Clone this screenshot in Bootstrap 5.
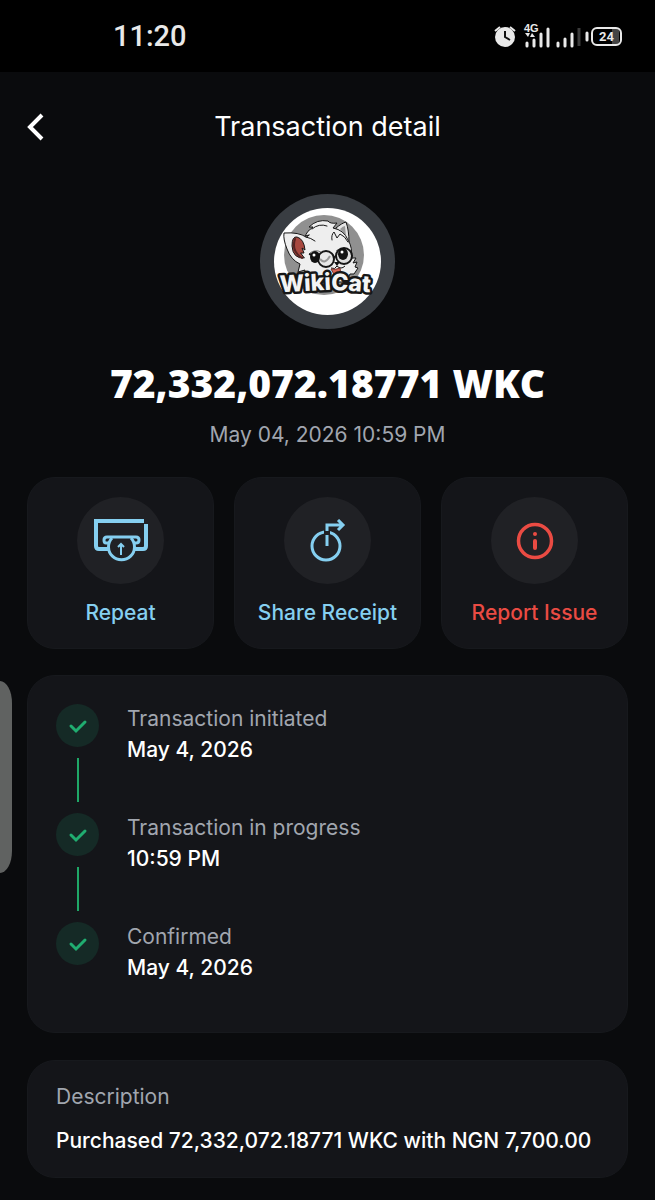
<!DOCTYPE html>
<html lang="en">
<head>
  <meta charset="UTF-8" />
  <meta name="viewport" content="width=device-width, initial-scale=1.0"/>
  <title>Transaction detail</title>
  <link href="https://cdn.jsdelivr.net/npm/bootstrap@5.3.3/dist/css/bootstrap.min.css" rel="stylesheet">
  <style>
    body {
      background: #0a0b0d;
      color: #fff;
      font-family: Inter, "Liberation Sans", sans-serif;
      font-size: 21px;
      line-height: 30px;
    }
    .status-bar {
      background: #000;
      height: 72px;
      padding: 0 33px 0 113px;
      font-family: Roboto, sans-serif;
      font-size: 29px;
      font-weight: 500;
      color: #e9e9e9;
    }
    .screen { padding: 0 27px; }
    .top-bar {
      display: grid;
      grid-template-columns: 40px 1fr 40px;
      height: 110px;
    }
    .top-bar h1 { font-size: 27px; font-weight: 400; line-height: 36px; }
    .back-link { color: #fff; line-height: 0; }
    .avatar {
      width: 135px;
      height: 135px;
      margin-top: 12px;
      background: #393d42;
    }
    .amount {
      font-family: "Open Sans", sans-serif;
      font-size: 39px;
      font-weight: 800;
      line-height: 48px;
      margin-top: 30px;
    }
    .muted { color: #a1a6af; }
    .when { margin-top: 13px; }
    .actions {
      display: grid;
      grid-template-columns: repeat(3, 1fr);
      gap: 20px;
      margin-top: 27px;
    }
    .panel, .action {
      background: #141519;
      border: 1px solid #17191d;
      border-radius: 28px;
      color: #fff;
    }
    .action {
      height: 172px;
      padding: 19px 0;
      font-weight: 500;
      line-height: 30px;
      color: #85cff0;
    }
    .action:hover { background: #1b1d21; }
    .action.issue { color: #ea4b43; }
    .action-icon {
      width: 87px;
      height: 87px;
      margin-bottom: 14px;
      background: #202125;
    }
    .panel { padding: 28px; margin-top: 26px; }
    .step { gap: 28px; height: 109px; }
    .step-mark { width: 43px; }
    .tick { width: 43px; height: 43px; background: #152a26; }
    .step-line { width: 2px; height: 44px; margin-top: 11px; background: #1fa767; }
    .step:last-child { height: 82px; }
    .value { font-weight: 500; }
    .step .value { margin-top: 1px; }
    .description { padding: 21px 28px; margin-top: 27px; }
    .description .value { margin-top: 14px; }
    /* edge handle floats over the left side of the page */
    .edge-handle {
      position: absolute;
      left: 0;
      top: 681px;
      width: 12px;
      height: 192px;
      background: #606261;
      border-radius: 0 12px 12px 0 / 0 22px 22px 0;
    }
  </style>
</head>
<body>
  <div class="status-bar d-flex align-items-center justify-content-between">
    <span>11:20</span>
    <svg width="128" height="30" viewBox="0 0 128 30" fill="none" aria-hidden="true">
      <circle cx="11" cy="16" r="10" fill="#e9e9e9"/>
      <path d="M1 10l5-4M16 6l5 4" stroke="#e9e9e9" stroke-width="2"/>
      <path d="M11 10v6l5 3" stroke="#111" stroke-width="2"/>
      <text x="30" y="11" font-family="Liberation Sans" font-size="11" font-weight="700" fill="#e9e9e9">4G</text>
      <path d="M31 12h5l-2 4zM36 16h5l-3-4z" fill="#e9e9e9"/>
      <path d="M33 22v3M40 19v6M47 13v12M54 8v17M64 22v3M71 18v7M78 13v12" stroke="#e9e9e9" stroke-width="3" stroke-linecap="round"/>
      <path d="M85 7v18" stroke="#3b3b3b" stroke-width="3"/>
      <path d="M93 12v7" stroke="#e9e9e9" stroke-width="3" stroke-linecap="round"/>
      <rect x="118" y="8" width="7" height="15" fill="#444"/>
      <rect x="98" y="7" width="29" height="17" rx="5" stroke="#e9e9e9" stroke-width="2"/>
      <text x="105" y="20" font-family="Roboto" font-size="13" font-weight="700" fill="#e9e9e9">24</text>
    </svg>
  </div>

  <main class="screen">
    <header class="top-bar align-items-center">
      <a href="#" class="back-link" aria-label="Back">
        <svg width="18" height="28" viewBox="0 0 18 28"><path d="M15 2L3 14l12 12" fill="none" stroke="#fff" stroke-width="4"/></svg>
      </a>
      <h1 class="text-center m-0">Transaction detail</h1>
    </header>

    <section class="text-center">
      <div class="avatar rounded-circle mx-auto d-flex align-items-center justify-content-center">
        <svg width="107" height="107" viewBox="0 0 107 107" role="img" aria-label="Wiki Cat">
          <circle cx="53.500" cy="53.500" r="53.500" fill="#fff"/>
          <circle cx="50" cy="47" r="40" fill="#909090"/>
          <g stroke="#161616" stroke-width="1" stroke-linejoin="round" stroke-linecap="round">
            <path d="M62 20Q68 15 72 14Q75 22 75 34Z" fill="#e6e6e6"/>
            <path d="M66 21Q69 18 71 18L72 28Z" fill="#999" stroke="none"/>
            <path d="M32 29Q25 24 10 25Q9 31 13 41Q17 52 26 56L24 64L31 62L30 69L39 74H72L76 66L80 66L84 60L81 59L83 54L79 55L82 50L77 50Q79 40 74 32Q70 22 59 20L63 15Q56 16 54 13Q43 11 35 19L39 19Q33 23 31 28L35 27Z" fill="#eee"/>
            <path d="M30 50Q19 51 18 38Q18 28 23 29Q30 31 31 42L28 40L30 45L27 45Z" fill="#a8483f"/>
            <path d="M21 31Q17 43 28 50" fill="none" stroke="#552423" stroke-width="2"/>
            <path d="M38 21Q45 15 53 18M58 32Q57 27 60 24L63 30L66 26Q71 28 74 34M32 29Q37 30 41 33" fill="none"/>
          </g>
          <path d="M36 45Q41 41 47 44M62 43Q67 39 73 42" fill="none" stroke="#777" stroke-width="1"/>
          <g fill="none" stroke="#161616" stroke-width="2">
            <circle cx="52" cy="51" r="8" fill="#e8e8e8"/>
            <path d="M46 51Q51 57 56 48" stroke="#999"/>
            <circle cx="70" cy="48" r="8" fill="#ddd"/>
            <path d="M60 50Q61 48 63 48M35 46L45 48"/>
          </g>
          <ellipse cx="41" cy="49" rx="5" ry="6" fill="#111"/>
          <ellipse cx="69" cy="46" rx="5" ry="6" fill="#111"/>
          <circle cx="40" cy="47" r="1.500" fill="#fff"/>
          <circle cx="68" cy="44" r="1.500" fill="#fff"/>
          <path d="M60 54h6l-3 4z" fill="#111"/>
          <path d="M57 60Q61 62 63 58Q67 62 71 58" fill="none" stroke="#111"/>
          <path d="M57 61Q62 62 66 60L67 68H61Z" fill="#d56457" stroke="#742e28"/>
          <g font-family="Inter" font-size="23" font-weight="800" fill="#f4f4f4" stroke="#171717" stroke-width="5" stroke-linejoin="round" paint-order="stroke">
            <text x="6" y="83" transform="rotate(-3 32 80)">Wiki</text>
            <text x="57" y="83" transform="rotate(4 76 80)">Cat</text>
          </g>
        </svg>
      </div>
      <div class="amount">72,332,072.18771 WKC</div>
      <div class="muted when">May 04, 2026 10:59 PM</div>
    </section>

    <section class="actions">
      <button type="button" class="action d-flex flex-column align-items-center">
        <span class="action-icon rounded-circle d-flex align-items-center justify-content-center">
          <svg width="54" height="46" viewBox="0 0 54 46" fill="none" stroke="currentColor" stroke-width="4" aria-hidden="true">
            <path d="M50 3H2V28Q2 31 5 31H14M41 31H49Q52 31 52 28V6"/>
            <path d="M15 25H12Q10 25 10 22Q10 19 13 19H42Q45 19 45 22Q45 25 42 25H40" stroke-width="3"/>
            <path d="M18 20A13 13 0 1 0 37 20" stroke-width="3"/>
            <path d="M27 37V27M24 29l3-3 3 3" stroke-width="2"/>
          </svg>
        </span>
        Repeat
      </button>
      <button type="button" class="action d-flex flex-column align-items-center">
        <span class="action-icon rounded-circle d-flex align-items-center justify-content-center">
          <svg width="36" height="44" viewBox="0 0 36 44" fill="none" stroke="currentColor" stroke-width="3" aria-hidden="true">
            <circle cx="16" cy="27" r="14"/>
            <path d="M17 10v6" stroke="#202125" stroke-width="6"/>
            <path d="M17 27V16M17 12V6H33M28 1l5 5-5 5"/>
          </svg>
        </span>
        Share Receipt
      </button>
      <button type="button" class="action issue d-flex flex-column align-items-center">
        <span class="action-icon rounded-circle d-flex align-items-center justify-content-center">
          <svg width="38" height="38" viewBox="0 0 38 38" fill="none" stroke="currentColor" aria-hidden="true">
            <circle cx="19" cy="19" r="16.500" stroke-width="3.500"/>
            <path d="M19 19v7" stroke-width="4" stroke-linecap="round"/>
            <circle cx="19" cy="12" r="2" fill="currentColor" stroke="none"/>
          </svg>
        </span>
        Report Issue
      </button>
    </section>

    <section class="panel">
      <div class="step d-flex">
        <div class="step-mark d-flex flex-column align-items-center">
          <div class="tick rounded-circle d-flex align-items-center justify-content-center">
            <svg width="20" height="16" viewBox="0 0 20 16" aria-hidden="true"><path d="M3 8l5 5L17 4" fill="none" stroke="#20ad70" stroke-width="3" stroke-linecap="round"/></svg>
          </div>
          <div class="step-line"></div>
        </div>
        <div>
          <div class="muted">Transaction initiated</div>
          <div class="value">May 4, 2026</div>
        </div>
      </div>
      <div class="step d-flex">
        <div class="step-mark d-flex flex-column align-items-center">
          <div class="tick rounded-circle d-flex align-items-center justify-content-center">
            <svg width="20" height="16" viewBox="0 0 20 16" aria-hidden="true"><path d="M3 8l5 5L17 4" fill="none" stroke="#20ad70" stroke-width="3" stroke-linecap="round"/></svg>
          </div>
          <div class="step-line"></div>
        </div>
        <div>
          <div class="muted">Transaction in progress</div>
          <div class="value">10:59 PM</div>
        </div>
      </div>
      <div class="step d-flex">
        <div class="step-mark">
          <div class="tick rounded-circle d-flex align-items-center justify-content-center">
            <svg width="20" height="16" viewBox="0 0 20 16" aria-hidden="true"><path d="M3 8l5 5L17 4" fill="none" stroke="#20ad70" stroke-width="3" stroke-linecap="round"/></svg>
          </div>
        </div>
        <div>
          <div class="muted">Confirmed</div>
          <div class="value">May 4, 2026</div>
        </div>
      </div>
    </section>

    <section class="panel description">
      <div class="muted">Description</div>
      <div class="value">Purchased 72,332,072.18771 WKC with NGN 7,700.00</div>
    </section>
  </main>
  <div class="edge-handle"></div>

  <script src="https://cdn.jsdelivr.net/npm/bootstrap@5.3.3/dist/js/bootstrap.bundle.min.js"></script>
</body>
</html>
